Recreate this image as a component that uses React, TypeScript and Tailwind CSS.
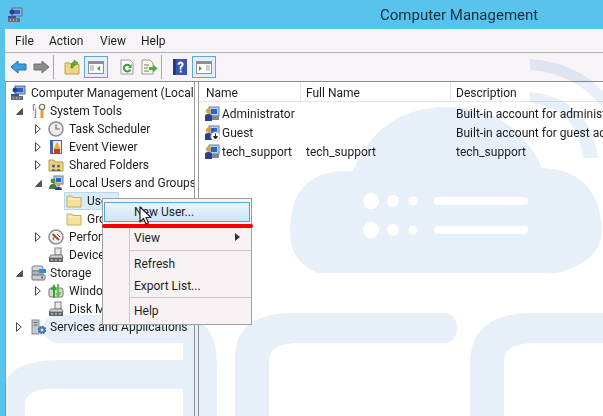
import type { ReactNode } from 'react'

function AppIcon() {
  return (
    <svg width="16" height="16" viewBox="0 0 16 16" className="shrink-0">
      <rect x="5" y="1" width="10" height="8" fill="#8fb4dd" stroke="#5f6f86" />
      <rect x="7" y="3" width="6" height="4" fill="#2f62c8" />
      <circle cx="5" cy="5" r="2.5" fill="#26408f" />
      <path d="M1 9 L9 9 L9 12 L1 12 Z" fill="#3a5596" />
      <rect x="1" y="11" width="12" height="4" fill="#666d75" />
      <path d="M3 13h1M6 13h1M9 13h1" stroke="#e8e8e8" />
    </svg>
  )
}

function UserIcon({ down }: { down?: boolean }) {
  return (
    <svg width="16" height="16" viewBox="0 0 16 16" className="shrink-0">
      <rect x="5" y="1" width="10" height="9" fill="#b9cfe8" stroke="#6b7f98" />
      <rect x="7" y="3" width="6" height="5" fill="#2b62d0" />
      <circle cx="4.5" cy="5" r="2.6" fill="#d9a33c" />
      <path d="M1 15 L1 10 Q1 8 4 8 Q8 8 8 10 L8 15 Z" fill="#2a3f8f" />
      <rect x="8" y="10" width="7" height="4" fill="#7d8792" />
      {down && (
        <>
          <circle cx="11.5" cy="11.5" r="4.5" fill="#fff" stroke="#c8c8c8" />
          <path d="M11.5 8.5 V12 M9.5 11.5 L11.5 14 L13.5 11.5 Z" stroke="#222" fill="#222" />
        </>
      )}
    </svg>
  )
}

function ToolsIcon() {
  return (
    <svg width="16" height="16" viewBox="0 0 16 16" fill="none" className="shrink-0">
      <path d="M3 1 V5 Q3 7 4 7 V15" stroke="#8a8a8a" strokeWidth="2.4" />
      <path d="M3.6 2 V14" stroke="#f5f5f5" />
      <circle cx="11" cy="4" r="2.6" stroke="#7a7a7a" strokeWidth="1.4" />
      <path d="M11 7 V15" stroke="#e3a21a" strokeWidth="3" />
    </svg>
  )
}

function ClockIcon() {
  return (
    <svg width="16" height="16" viewBox="0 0 16 16" className="shrink-0">
      <circle cx="8" cy="8" r="7" fill="#eceef0" stroke="#8a8f96" strokeWidth="1.6" />
      <path d="M8 3.5 V8 H12" stroke="#8a6a2a" strokeWidth="1.2" fill="none" />
    </svg>
  )
}

function EventIcon() {
  return (
    <svg width="16" height="16" viewBox="0 0 16 16" className="shrink-0">
      <rect x="2" y="1" width="12" height="14" fill="#4168a8" />
      <rect x="5" y="2" width="8" height="12" fill="#f1ece0" />
      <path d="M9 3 L12.5 10 H5.5 Z" fill="#e8b020" />
      <rect x="6" y="10" width="6" height="4" fill="#c03a2e" />
    </svg>
  )
}

function SharedIcon() {
  return (
    <svg width="16" height="16" viewBox="0 0 16 16" className="shrink-0">
      <path d="M1 3 H6 L7.5 5 H15 V14 H1 Z" fill="#ecd27e" stroke="#b59a48" />
      <circle cx="5.5" cy="9" r="1.6" fill="#3f5ea8" />
      <circle cx="10.5" cy="9" r="1.6" fill="#3c7f46" />
      <path d="M3 14 Q5.5 10 8 14 Q10.5 10 13 14 Z" fill="#45608a" />
    </svg>
  )
}

function UsersIcon() {
  return (
    <svg width="16" height="16" viewBox="0 0 16 16" className="shrink-0">
      <rect x="6" y="1" width="9" height="8" fill="#b9cfe8" stroke="#6b7f98" />
      <rect x="8" y="3" width="5" height="4" fill="#2b62d0" />
      <circle cx="5" cy="6" r="2.4" fill="#4a8a4e" />
      <path d="M1 14 Q1 9 5 9 Q9 9 9 14 Z" fill="#3f7d44" />
      <circle cx="10.5" cy="10" r="2" fill="#d9a33c" />
      <path d="M7 15 Q7 12 10.5 12 Q14 12 14 15 Z" fill="#2a3f8f" />
    </svg>
  )
}

function FolderIcon() {
  return (
    <svg width="16" height="16" viewBox="0 0 16 16" className="shrink-0">
      <path d="M1 3 H6 L7 4.5 H15 V14 H1 Z" fill="#f6e19a" stroke="#c9ad5c" />
      <path d="M2 6 H14" stroke="#fdf5d0" />
    </svg>
  )
}

function PerfIcon() {
  return (
    <svg width="16" height="16" viewBox="0 0 16 16" className="shrink-0">
      <circle cx="8" cy="8" r="7" fill="#f2efe8" stroke="#8f9197" strokeWidth="1.6" />
      <path d="M4.5 5 L11 11" stroke="#c9322a" strokeWidth="1.8" />
      <path d="M5 11 L7 6 M9 5 L12 8" stroke="#555" />
    </svg>
  )
}

function DeviceIcon() {
  return (
    <svg width="16" height="16" viewBox="0 0 16 16" className="shrink-0">
      <rect x="7" y="1" width="6" height="7" fill="#e9e9e9" stroke="#7d7d7d" />
      <path d="M3 8 H14 L15 11 H1 Z" fill="#d4d4d4" stroke="#777" />
      <rect x="1" y="11" width="14" height="4" fill="#5f656c" />
      <path d="M3 13h2M7 13h2M11 13h2" stroke="#e5e5e5" />
    </svg>
  )
}

function StorageIcon() {
  return (
    <svg width="16" height="16" viewBox="0 0 16 16" className="shrink-0">
      <rect x="1" y="1" width="11" height="5" rx="2" fill="#d4d8dc" stroke="#7b8087" />
      <rect x="1" y="6" width="11" height="4" fill="#aeb4ba" stroke="#7b8087" />
      <rect x="1" y="10" width="13" height="5" rx="1" fill="#c8ccd0" stroke="#6f747b" />
      <rect x="8" y="4" width="7" height="4" fill="#2e8ed6" />
      <circle cx="11" cy="12.5" r="1" fill="#555" />
    </svg>
  )
}

function BackupIcon() {
  return (
    <svg width="16" height="16" viewBox="0 0 16 16" className="shrink-0">
      <rect x="1" y="5" width="14" height="9" rx="2" fill="#d5d8d2" stroke="#777" />
      <path d="M5 15 V7 L2.5 7 L6 1 L9 7 H7 V15 Z" fill="#3aa335" />
      <path d="M11 1 V9 H13.5 L10 15 L7.5 10 H9 V1 Z" fill="#62c04a" />
    </svg>
  )
}

function ServicesIcon() {
  return (
    <svg width="16" height="16" viewBox="0 0 16 16" className="shrink-0">
      <rect x="1" y="1" width="7" height="14" fill="#c2c8d0" stroke="#858b94" />
      <path d="M2.5 3.5 H6.5 M2.5 6 H6.5" stroke="#5b6470" />
      <circle cx="11" cy="11" r="3.4" fill="#4e8bd0" stroke="#3a6aa5" strokeWidth="1.6" strokeDasharray="1.6 1" />
      <circle cx="11" cy="11" r="1.2" fill="#e9f1fa" />
    </svg>
  )
}

function Caret({ open }: { open?: boolean }) {
  if (open) {
    return (
      <svg width="7" height="7" viewBox="0 0 7 7">
        <path d="M6.5 0.5 V6.5 H0.5 Z" fill="#555" stroke="#555" />
      </svg>
    )
  }
  return (
    <svg width="6" height="10" viewBox="0 0 6 10">
      <path d="M0.5 0.7 L5.3 5 L0.5 9.3 Z" fill="#fff" stroke="#4a4a4a" />
    </svg>
  )
}

type Row = { label: string; icon: ReactNode; pad: string; slot: string; gap: string; caret?: 'open' | 'closed'; selected?: boolean }

const depth1 = { pad: 'pl-[10px]', slot: 'w-[15px]', gap: 'ml-[3px]' }
const depth2 = { pad: 'pl-[29px]', slot: 'w-[13px]', gap: 'ml-[5px]' }
const depth3 = { pad: 'pl-[44px]', slot: 'w-[16px]', gap: 'ml-[5px]' }

const tree: Row[] = [
  { label: 'System Tools', icon: <ToolsIcon />, ...depth1, caret: 'open' },
  { label: 'Task Scheduler', icon: <ClockIcon />, ...depth2, caret: 'closed' },
  { label: 'Event Viewer', icon: <EventIcon />, ...depth2, caret: 'closed' },
  { label: 'Shared Folders', icon: <SharedIcon />, ...depth2, caret: 'closed' },
  { label: 'Local Users and Groups', icon: <UsersIcon />, ...depth2, caret: 'open' },
  { label: 'Users', icon: <FolderIcon />, ...depth3, selected: true },
  { label: 'Groups', icon: <FolderIcon />, ...depth3 },
  { label: 'Performance', icon: <PerfIcon />, ...depth2, caret: 'closed' },
  { label: 'Device Manager', icon: <DeviceIcon />, ...depth2 },
  { label: 'Storage', icon: <StorageIcon />, ...depth1, caret: 'open' },
  { label: 'Windows Server Backup', icon: <BackupIcon />, ...depth2, caret: 'closed' },
  { label: 'Disk Management', icon: <DeviceIcon />, ...depth2 },
  { label: 'Services and Applications', icon: <ServicesIcon />, ...depth1, caret: 'closed' },
]

const users = [
  { name: 'Administrator', full: '', desc: 'Built-in account for administering the computer/domain' },
  { name: 'Guest', full: '', desc: 'Built-in account for guest access to the computer/domain', down: true },
  { name: 'tech_support', full: 'tech_support', desc: 'tech_support' },
]

function ArrowBtn({ color, edge, flip }: { color: string; edge: string; flip?: boolean }) {
  return (
    <svg width="17" height="14" viewBox="0 0 17 14" className={flip ? 'rotate-180' : ''}>
      <path d="M1 7 L8 1 V4 H16 V10 H8 V13 Z" fill={color} stroke={edge} strokeLinejoin="round" />
    </svg>
  )
}

function Watermark() {
  return (
    <svg
      width="603"
      height="416"
      viewBox="0 0 603 416"
      className="absolute left-0 top-0 pointer-events-none mix-blend-multiply"
    >
      <g fill="#e7f0f8">
        {/* cloud */}
        <path d="M318 273 Q290 262 290 232 Q290 172 345 171 L353 171 Q380 107 447 107 Q515 107 542 168 Q600 170 602 232 Q600 262 557 273 Z" />
        {/* arches */}
        <path d="M55 315 H180 Q217 318 217 365 V416 H183 V389 H45 Q25 391 25 405 V416 H5 V385 Q8 361 60 360 H183 V343 H55 Q43 338 43 329 Q43 318 55 315 Z" />
        <path d="M235 416 V355 Q237 314 290 313 H445 Q457 314 457 328 Q457 342 445 343 H295 Q269 345 269 360 V416 Z" />
        <path d="M470 416 V360 Q472 314 530 313 H603 V343 H530 Q504 345 504 360 V416 Z" />
        {/* wifi arcs */}
        <path d="M530 59 Q575 62 603 91 L603 108 Q575 73 530 70 Z" />
        <path d="M530 92 Q590 98 598 158 L583 158 Q578 108 530 103 Z" />
      </g>
      <g fill="#fff">
        <circle cx="371" cy="201" r="8" />
        <circle cx="393" cy="201" r="6" />
        <circle cx="413" cy="201" r="4.5" />
        <rect x="434" y="197" width="94" height="8" rx="4" />
        <circle cx="371" cy="230" r="8" />
        <circle cx="393" cy="230" r="6" />
        <circle cx="413" cy="230" r="4.5" />
        <rect x="434" y="226" width="94" height="8" rx="4" />
      </g>
    </svg>
  )
}

export default function App() {
  return (
    <div className='relative w-[603px] h-[416px] overflow-hidden bg-[#58c4ee] text-[12px] text-[#1c1c1c] font-["Roboto",sans-serif]'>
      <div className="h-[29px] flex items-center pl-[7px] relative">
        <AppIcon />
        <span className="ml-[357px] mt-[2px] text-[15px] text-[#14303f]">Computer Management</span>
      </div>

      <div className="ml-[5px] h-[387px] bg-white flex flex-col">
        {/* menu bar */}
        <div className="h-[24px] flex items-center pl-[10px] bg-[#f6f4f7] border-b border-[#b4b4b4] shrink-0">
          <span className="w-[34px]">File</span>
          <span className="w-[51px]">Action</span>
          <span className="w-[41px]">View</span>
          <span>Help</span>
        </div>

        {/* toolbar */}
        <div className="h-[29px] flex items-center bg-[#f8f3f7] border-b border-[#8d8d8d] shrink-0">
          <div className="ml-[5px]"><ArrowBtn color="#3b9fdc" edge="#2173ad" /></div>
          <div className="ml-[6px]"><ArrowBtn color="#8c8c8c" edge="#6c6c6c" flip /></div>
          <div className="ml-[3px] w-px h-[24px] bg-[#a8a8a8]" />
          <svg width="16" height="16" viewBox="0 0 16 16" className="ml-[10px]">
            <path d="M1 4 H6 L7 5.5 H15 V15 H1 Z" fill="#f0d684" stroke="#b9a050" />
            <path d="M7 9 L7 7 Q7 3 10 3 V1 L14 4 L10 7 V5 Q9 5 9 9 Z" fill="#64b52f" stroke="#39811a" strokeWidth="0.6" />
          </svg>
          <div className="ml-[4px] w-[24px] h-[22px] border border-[#58a8d8] bg-[#e3eef7] flex items-center justify-center">
            <svg width="16" height="13" viewBox="0 0 16 13">
              <rect x="0.5" y="0.5" width="15" height="12" fill="#fff" stroke="#8a8f96" />
              <rect x="1" y="1" width="14" height="2" fill="#8a8f96" />
              <path d="M2 5 H6 M2 7 H6 M2 9 H6" stroke="#9aa0a6" />
              <path d="M12 5 V10 L9 7.5 Z" fill="#4a9a3a" />
            </svg>
          </div>
          <svg width="14" height="16" viewBox="0 0 14 16" className="ml-[12px]">
            <path d="M1 1 H10 L13 4 V15 H1 Z" fill="#fafafa" stroke="#9b9b9b" />
            <path d="M10 7 A3.4 3.4 0 1 0 10.4 10.5" fill="none" stroke="#3f9a3f" strokeWidth="2" />
            <path d="M11.5 5 V9 H8 Z" fill="#3f9a3f" />
          </svg>
          <svg width="17" height="16" viewBox="0 0 17 16" className="ml-[7px]">
            <path d="M1 1 H9 L12 4 V15 H1 Z" fill="#fbf7e6" stroke="#9b9b9b" />
            <path d="M3 6 H8 M3 9 H7 M3 12 H8" stroke="#777" />
            <path d="M8 8 H12 V5.5 L16.5 9.5 L12 13.5 V11 H8 Z" fill="#4eb03a" />
          </svg>
          <div className="ml-[3px] w-px h-[24px] bg-[#a8a8a8]" />
          <svg width="14" height="16" viewBox="0 0 14 16" className="ml-[11px]">
            <rect width="14" height="16" fill="#3654b0" />
            <rect x="0" y="0" width="3" height="16" fill="#24397f" />
            <path d="M4.5 5.5 Q5 2.5 8 2.5 Q11 3 10.5 6 Q10 7.5 8.5 8.5 V10.5 H6.8 V7.6 Q8.8 6.5 8.6 5 Q7.5 3.8 6.6 5.8 Z" fill="#fff" />
            <rect x="6.8" y="11.5" width="1.8" height="2" fill="#fff" />
          </svg>
          <div className="ml-[5px] w-[24px] h-[22px] border border-[#58a8d8] bg-[#e3eef7] flex items-center justify-center">
            <svg width="16" height="13" viewBox="0 0 16 13">
              <rect x="0.5" y="0.5" width="15" height="12" fill="#fff" stroke="#8a8f96" />
              <rect x="1" y="1" width="14" height="2" fill="#8a8f96" />
              <path d="M3 5 V10 L6 7.5 Z" fill="#4a9a3a" />
              <path d="M10 5 H14 M10 7 H14 M10 9 H14" stroke="#9aa0a6" />
            </svg>
          </div>
        </div>

        {/* panes */}
        <div className="flex-1 flex min-h-0">
          <div className="w-[190px] border-l border-r border-[#9a9a9a] overflow-hidden pt-[2px] shrink-0">
            <div className="h-[18px] flex items-center pl-[4px] whitespace-nowrap">
              <AppIcon />
              <span className="ml-[5px]">Computer Management (Local)</span>
            </div>
            {tree.map((row) => (
              <div key={row.label} className={`h-[18px] flex items-center whitespace-nowrap ${row.pad}`}>
                <div className={`shrink-0 flex items-center ${row.slot}`}>
                  {row.caret === 'open' && <Caret open />}
                  {row.caret === 'closed' && <Caret />}
                </div>
                {row.selected ? (
                  <div className="flex items-center bg-[#d9ebf9] border border-[#b8d8f0] h-[18px] w-[55px] -ml-[2px] pl-px">
                    {row.icon}
                    <span className={row.gap}>{row.label}</span>
                  </div>
                ) : (
                  <>
                    {row.icon}
                    <span className={row.gap}>{row.label}</span>
                  </>
                )}
              </div>
            ))}
          </div>

          <div className="w-[3px] shrink-0" />

          <div className="flex-1 border-l border-[#9a9a9a] overflow-hidden min-w-0">
            <div className="h-[20px] flex items-stretch border-b border-[#e6e6e6] whitespace-nowrap">
              <div className="w-[102px] pl-[7px] pt-[3px] border-r border-[#e6e6e6] flex items-center shrink-0">Name</div>
              <div className="w-[150px] pl-[5px] pt-[3px] border-r border-[#e6e6e6] flex items-center shrink-0">Full Name</div>
              <div className="pl-[5px] pt-[3px] flex items-center">Description</div>
            </div>
            <div className="pt-[2px]">
              {users.map((u) => (
                <div key={u.name} className="h-[19px] flex items-center whitespace-nowrap">
                  <div className="w-[102px] pl-[5px] flex items-center shrink-0">
                    <UserIcon down={u.down} />
                    <span className="ml-[2px]">{u.name}</span>
                  </div>
                  <div className="w-[150px] pl-[5px] shrink-0">{u.full}</div>
                  <div className="pl-[5px]">{u.desc}</div>
                </div>
              ))}
            </div>
          </div>
        </div>
      </div>

      <Watermark />

      {/* context menu */}
      <div className="absolute left-[102px] top-[198px] w-[150px] h-[127px] bg-[#f8f2f5] border border-[#a0a0a0]">
        <div className="absolute left-[26px] top-[26px] bottom-[1px] w-px bg-[#c8c8c8]" />
        <div className="mt-[3px] mx-px h-[20px] w-[146px] border border-[#4fa7d9] bg-gradient-to-b from-[#eaf4fc] to-[#cfe5f7] flex items-center pl-[29px]">
          New User...
        </div>
        <div className="h-[28px] flex items-end pb-[3px] pl-[31px] relative">
          <span>View</span>
          <svg width="5" height="8" viewBox="0 0 5 8" className="absolute right-[11px] top-[11px]">
            <path d="M0 0 L5 4 L0 8 Z" fill="#333" />
          </svg>
        </div>
        <div className="ml-[27px] h-px bg-[#c8c8c8]" />
        <div className="h-[22px] mt-[2px] flex items-center pl-[31px]">Refresh</div>
        <div className="h-[22px] flex items-center pl-[31px]">Export List...</div>
        <div className="ml-[27px] h-px bg-[#c8c8c8]" />
        <div className="h-[26px] flex items-center pl-[31px]">Help</div>
      </div>

      {/* red underline */}
      <div className="absolute left-[102px] top-[224px] w-[151px] h-[4px] rounded-full bg-[#f40000]" />

      {/* mouse pointer */}
      <svg width="13" height="20" viewBox="0 0 13 20" className="absolute left-[139px] top-[206px]">
        <path d="M1 1 V16 L4.5 12.5 L7 18 L9.5 17 L7 11.5 H12 Z" fill="#fff" stroke="#222" strokeWidth="1.2" strokeLinejoin="round" />
      </svg>
    </div>
  )
}
